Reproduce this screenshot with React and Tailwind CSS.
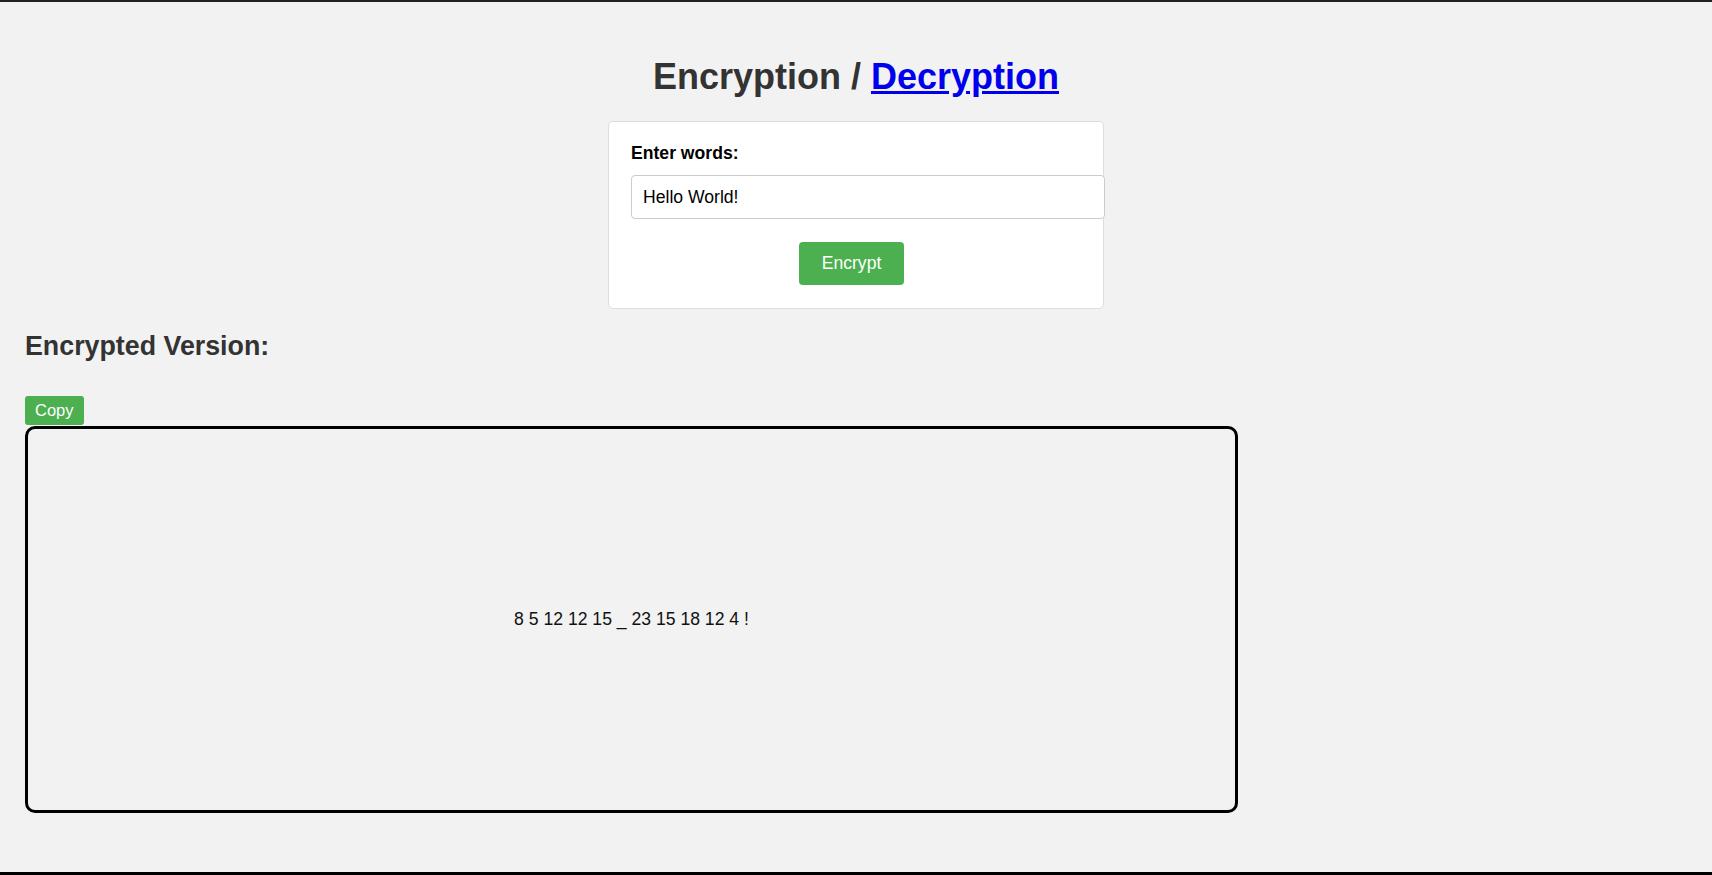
import React, { useState } from 'react';

const encode = (text) =>
  text
    .split('')
    .map((ch) => {
      const c = ch.toLowerCase();
      if (c >= 'a' && c <= 'z') return c.charCodeAt(0) - 96;
      if (c === ' ') return '_';
      return ch;
    })
    .join(' ');

export default function App() {
  const [words, setWords] = useState('Hello World!');
  const [result, setResult] = useState(encode('Hello World!'));

  return (
    <div className="h-[875px] bg-[#f2f2f2] border-t-2 border-t-[#222] border-b-[3px] border-b-black font-['Liberation_Sans',Arial,sans-serif] text-[16px] overflow-hidden">
      <h1 className="mt-[54px] text-center text-[36px] leading-[41px] font-bold text-[#333]">
        Encryption / <a href="#" className="text-[#0000ee] underline">Decryption</a>
      </h1>

      <div className="mx-auto mt-[24px] w-[496px] bg-white border border-[#dddddd] rounded-[5px] pl-[22px] pt-[21px] pb-[23px]">
        <label className="block text-[17.6px] leading-[20px] font-bold text-black">Enter words:</label>
        <input
          value={words}
          onChange={(e) => setWords(e.target.value)}
          className="mt-[12px] block w-[474px] h-[44px] pl-[11px] bg-white border border-[#cccccc] rounded-[4px] text-[17.6px] text-black outline-none"
        />
        <button
          onClick={() => setResult(encode(words))}
          className="mt-[23px] ml-[168px] w-[105px] h-[43px] bg-[#4caf50] text-white text-[17.6px] rounded-[4px]"
        >
          Encrypt
        </button>
      </div>

      <div className="pl-[25px]">
        <h2 className="mt-[23px] text-[26.8px] leading-[28px] font-bold text-[#333]">Encrypted Version:</h2>
        <button className="mt-[36px] block h-[29px] px-[10px] bg-[#4caf50] text-white text-[16.5px] leading-[19px] rounded-[3px]">
          Copy
        </button>
        <div className="mt-[1px] w-[1213px] h-[387px] border-[3px] border-black rounded-[10px] flex items-center justify-center text-[17.6px] text-[#111]">
          {result}
        </div>
      </div>
    </div>
  );
}
